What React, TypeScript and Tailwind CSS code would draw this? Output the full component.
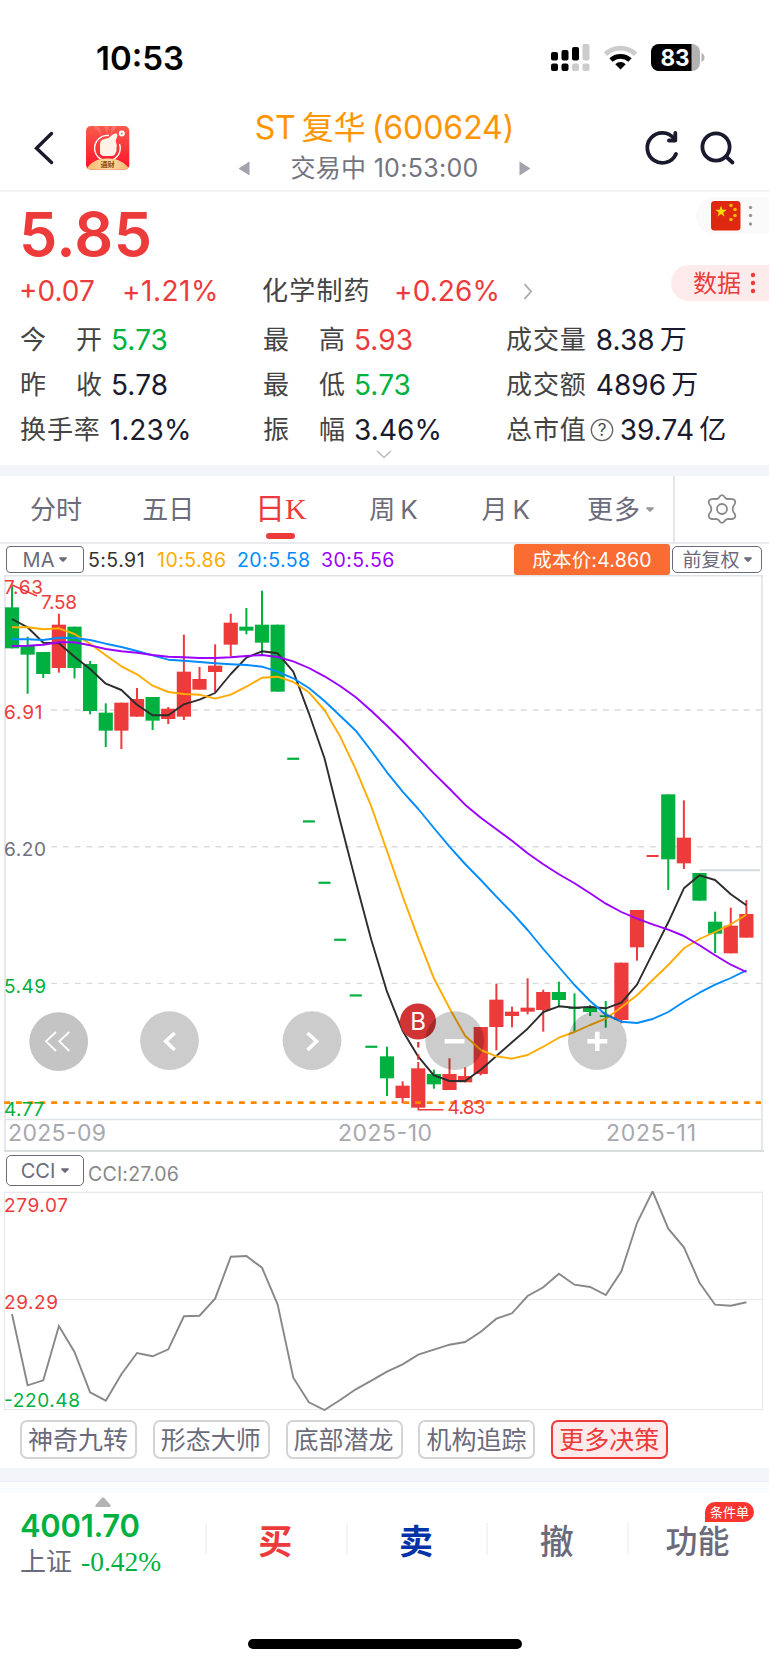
import React from "react";

type Candle = [color: "r" | "g", top: number, bottom: number, high: number, low: number];

const X0 = 12;
const STEP = 15.625;
const RED = "#ed3b3b";
const GREEN = "#00b140";
const xAt = (i: number) => X0 + i * STEP;

/* Values are stored in thirds of a pixel, relative to a base line. */
const upper = (v: number) => 465 + v / 3;
const lower = (v: number) => 760 + v / 3;

const upperCandles: Candle[] = [
  ["g", 427, 550, 362, 550],
  ["g", 543, 569, 515, 686],
  ["g", 561, 627, 561, 639],
  ["r", 479, 609, 446, 623],
  ["g", 485, 609, 485, 640],
  ["g", 597, 738, 588, 748],
  ["g", 743, 797, 715, 846],
  ["r", 713, 797, 713, 852],
  ["r", 702, 755, 669, 755],
  ["g", 696, 767, 696, 795],
  ["r", 731, 762, 726, 777],
  ["r", 620, 755, 509, 765],
  ["r", 642, 674, 606, 674],
  ["r", 602, 621, 538, 681],
  ["r", 473, 539, 446, 574],
  ["g", 485, 497, 429, 508],
  ["g", 479, 533, 377, 572],
  ["g", 479, 680, 479, 680],
];

const lowerCandles: Candle[] = [
  ["g", 889, 955, 860, 1008],
  ["r", 977, 1014, 964, 1030],
  ["r", 925, 1043, 906, 1043],
  ["g", 942, 973, 929, 986],
  ["r", 942, 990, 895, 990],
  ["r", 948, 967, 922, 967],
  ["r", 801, 942, 801, 946],
  ["r", 719, 801, 671, 871],
  ["r", 755, 768, 740, 802],
  ["r", 743, 755, 655, 763],
  ["r", 696, 750, 689, 815],
  ["g", 696, 720, 665, 738],
  ["g", 742, 747, 700, 815],
  ["g", 740, 756, 735, 768],
  ["g", 766, 771, 723, 803],
  ["r", 608, 780, 608, 790],
  ["r", 450, 562, 450, 602],
  ["r", 285, 291, 288, 288],
  ["g", 103, 298, 103, 390],
  ["r", 233, 310, 121, 327],
  ["g", 339, 422, 339, 422],
  ["g", 485, 521, 455, 579],
  ["r", 497, 580, 443, 580],
  ["r", 462, 533, 420, 533],
];

const limitDays: [number, number][] = [
  [18, upper(881)],
  [19, lower(184)],
  [20, lower(368)],
  [21, lower(539)],
  [22, lower(706)],
  [23, lower(860)],
];

const series = (up: number[], low: number[]) => [...up.map(upper), ...low.map(lower)];

const ma5 = series(
  [462, 487, 533, 535, 575, 612, 656, 675, 719, 751, 751, 718, 704, 684, 627, 578, 559, 565, 620, 745],
  [-5, 182, 365, 541, 695, 812, 890, 946, 963, 963, 929, 888, 847, 806, 756, 739, 743, 741, 745, 728, 674, 580, 487, 385, 346, 360, 403, 436]
);
const ma10 = series(
  [487, 487, 493, 490, 507, 536, 571, 604, 628, 662, 681, 687, 689, 701, 689, 665, 638, 635, 651, 682, 735, 814],
  [28, 140, 273, 408, 536, 655, 745, 827, 870, 889, 896, 885, 860, 833, 816, 795, 776, 742, 706, 660, 615, 565, 537, 516, 493, 464]
);
const ma20 = series(
  [523, 523, 525, 518, 519, 525, 536, 546, 558, 571, 584, 587, 591, 595, 598, 600, 605, 620, 640, 669, 708, 752, 797, 858],
  [37, 95, 147, 204, 260, 312, 360, 410, 458, 510, 567, 621, 675, 723, 764, 785, 789, 777, 756, 725, 698, 674, 654, 631]
);
const ma30 = series(
  [543, 542, 539, 532, 532, 541, 552, 559, 563, 570, 575, 577, 579, 579, 577, 573, 570, 576, 589, 609, 634, 663, 697, 738, 782, 828],
  [-8, 40, 86, 134, 173, 208, 242, 280, 313, 343, 370, 400, 431, 456, 476, 493, 509, 528, 556, 586, 614, 636]
);
const cci = [
  492, 706, 691, 528, 606, 727, 752, 673, 609, 619, 598, 499, 497, 446, 320, 318, 353, 463, 683, 757, 780, 750, 718, 692,
  665, 643, 614, 599, 584, 576, 545, 506, 490, 438, 412, 371, 404, 411, 435, 364, 219, 124, 236, 292, 398, 464, 467, 457,
].map((v) => 1150 + v / 3);

const points = (ys: number[]) => ys.map((y, i) => `${xAt(i).toFixed(1)},${y.toFixed(1)}`).join(" ");

function CandleShape({ i, c, map }: { i: number; c: Candle; map: (v: number) => number }) {
  const fill = c[0] === "r" ? RED : GREEN;
  const flat = c[2] - c[1] < 7;
  const w = flat ? 12 : 14.2;
  const x = xAt(i);
  return (
    <g fill={fill}>
      <rect x={x - 1} y={map(c[3])} width={2} height={(c[4] - c[3]) / 3} />
      <rect x={Math.max(5, x - w / 2)} y={map(c[1])} width={Math.min(w, x + w / 2 - 5)} height={(c[2] - c[1]) / 3} />
    </g>
  );
}

type LabelProps = { x: number; y: number; w: number; fill: string; size?: number; children: string };
function Label({ x, y, w, fill, size = 19, children }: LabelProps) {
  return (
    <text x={x} y={y} fill={fill} fontSize={size} textLength={w} lengthAdjust="spacing">
      {children}
    </text>
  );
}

function PriceChart() {
  return (
    <svg width="769" height="577" viewBox="0 575 769 577" className="block shrink-0">
      <path d="M5 1151V576M762 576V1151" stroke="#dfe4ea" strokeWidth="1.6" fill="none" />
      <path d="M4 575.5H763" stroke="#dfe3e7" strokeWidth="2" />
      <path d="M5 1119.5H762" stroke="#e0e4e7" strokeWidth="1.3" />
      <path d="M4 1151H764" stroke="#d9dddc" strokeWidth="2" />
      <g stroke="#d9dcdf" strokeWidth="1.4" strokeDasharray="5.87 5.87">
        <path d="M51.2 710H761" strokeWidth="2" stroke="#e0e4e4" />
        <path d="M51.2 846.7H761M51.2 983.4H761" />
      </g>
      <path d="M699.5 870.2H760" stroke="#d3dbe0" strokeWidth="2" />

      {upperCandles.map((c, i) => (
        <CandleShape key={i} i={i} c={c} map={upper} />
      ))}
      {lowerCandles.map((c, i) => (
        <CandleShape key={i} i={i + 24} c={c} map={lower} />
      ))}
      {limitDays.map(([i, y]) => (
        <rect key={i} x={xAt(i) - 6} y={y - 1} width={12} height={2.2} fill={GREEN} />
      ))}

      <path d="M4.2 1102.6H761" stroke="#ff8800" strokeWidth="2.8" strokeDasharray="5.87 5.87" />

      <g fill="none" strokeWidth="1.9" strokeLinejoin="round">
        <polyline points={points(ma5)} stroke="#2d2d2d" />
        <polyline points={points(ma10)} stroke="#ffab00" />
        <polyline points={points(ma20)} stroke="#008cff" />
        <polyline points={points(ma30)} stroke="#9c00ff" />
      </g>

      <path d="M12 585L37 596M418.3 1107V1109.8H443.5" stroke={RED} strokeWidth="1.6" fill="none" />
      <path d="M418.3 1042V1062" stroke="#cf3535" strokeWidth="2.2" strokeDasharray="5.5 6.8" />

      <circle cx="418" cy="1021.5" r="18" fill="#d03434" />
      <text x="418" y="1030" fontSize="24" fill="#fff" textAnchor="middle">B</text>

      <g fill="#000">
        <circle cx="58.7" cy="1041.7" r="29.4" fillOpacity=".23" />
        <circle cx="169.5" cy="1040.7" r="29.4" fillOpacity=".2" />
        <circle cx="312" cy="1040.7" r="29.4" fillOpacity=".2" />
        <circle cx="454.7" cy="1040.7" r="29.4" fillOpacity=".2" />
        <circle cx="597.3" cy="1040.7" r="29.4" fillOpacity=".2" />
      </g>
      <g fill="none" stroke="#fff">
        <path d="M56 1032L46 1041.3L56 1051M69.3 1032L59.3 1041.3L69.3 1051" strokeWidth="1.8" />
        <path d="M174.7 1033L165.7 1041.3L174.7 1050" strokeWidth="3.6" />
        <path d="M307.5 1033L316.5 1041.3L307.5 1050" strokeWidth="3.6" />
        <path d="M444.7 1041.3H464.5M587.3 1041.3H607.3M597.3 1031.7V1051" strokeWidth="4.6" />
      </g>

      <Label x={4} y={594.3} w={39} fill={RED}>7.63</Label>
      <Label x={41} y={608.7} w={36} fill={RED}>7.58</Label>
      <Label x={4} y={719.3} w={38.5} fill={RED}>6.91</Label>
      <Label x={4} y={855.7} w={42} fill="#6f707d">6.20</Label>
      <Label x={4} y={992.5} w={42} fill={GREEN}>5.49</Label>
      <Label x={4} y={1115.5} w={40} fill={GREEN}>4.77</Label>
      <Label x={447.5} y={1113.5} w={38} fill={RED}>4.83</Label>
      <Label x={8} y={1141} w={98} size={23} fill="#a8a8b0">2025-09</Label>
      <Label x={338} y={1141} w={94} size={23} fill="#a8a8b0">2025-10</Label>
      <Label x={606} y={1141} w={90} size={23} fill="#a8a8b0">2025-11</Label>
    </svg>
  );
}

function CciChart() {
  return (
    <svg width="769" height="220" viewBox="0 1191 769 220" className="block shrink-0">
      <path d="M4.5 1192.3H762.5V1409.5H4.5ZM4.5 1299.5H762.5" fill="none" stroke="#e6e8ea" strokeWidth="1.2" />
      <polyline points={points(cci)} fill="none" stroke="#888" strokeWidth="1.9" />
      <Label x={4} y={1211.7} w={64} fill={RED}>279.07</Label>
      <Label x={4} y={1309} w={54} fill={RED}>29.29</Label>
      <Label x={4} y={1406.5} w={76} fill={GREEN}>-220.48</Label>
    </svg>
  );
}

function Caret({ className = "" }: { className?: string }) {
  return (
    <svg width="8" height="5" viewBox="0 0 8 5" className={className}>
      <path d="M.3 .3H7.700V1.500L4.800 4.400Q4 5 3.200 4.400L.3 1.500Z" fill="currentColor" />
    </svg>
  );
}

function Stat({ label, spread, value, tone, unit, help }: {
  label: string; spread?: boolean; value: string; tone: string; unit?: string; help?: boolean;
}) {
  return (
    <div className="flex h-[45px] items-center">
      <div className={`flex text-[26px] text-[#444] ${spread ? "w-[82px] justify-between" : "tracking-[0.9px]"}`}>
        {spread ? [...label].map((ch) => <span key={ch}>{ch}</span>) : label}
      </div>
      {help ? (
        <svg width="24" height="24" viewBox="0 0 24 24" className="ml-[3px] shrink-0">
          <circle cx="12" cy="12" r="10.700" fill="none" stroke="#666" strokeWidth="1.300" />
          <text x="12" y="18" fontSize="17" textAnchor="middle" fill="#444">?</text>
        </svg>
      ) : null}
      <div className={`flex items-center text-[28px] ${tone} ${help ? "ml-[6px]" : "ml-[9px]"}`}>
        <span className="tracking-[0.1px]">{value}</span>
        {unit ? <span className="ml-[5px] text-[27px]">{unit}</span> : null}
      </div>
    </div>
  );
}

function StatusBar() {
  return (
    <div className="flex h-[96px] shrink-0 items-start pt-[41px]">
      <div className="ml-[96px] mt-px flex h-[33px] w-[455px] items-center text-[33px] font-semibold text-black">10:53</div>
      <svg width="160" height="33" viewBox="551 41 160 33">
        <rect x="551" y="52" width="7" height="8.500" rx="2" />
        <rect x="561.500" y="50" width="7" height="10.500" rx="2" />
        <rect x="572" y="47" width="7" height="13.500" rx="2" />
        <rect x="582.500" y="44" width="7" height="16.500" rx="2" fill="#ccc" />
        <rect x="551" y="63.500" width="7" height="7.500" rx="2" />
        <rect x="561.500" y="63.500" width="7" height="7.500" rx="2" />
        <rect x="572" y="63.500" width="7" height="7.500" rx="2" fill="#ccc" />
        <rect x="582.500" y="63.500" width="7" height="7.500" rx="2" fill="#ccc" />
        <g fill="none" strokeWidth="4.800">
          <path d="M605.500 54.200A21.500 21.500 0 0 1 635.500 54.200" stroke="#ccc" />
          <path d="M611 60A14 14 0 0 1 630 60" stroke="#000" />
        </g>
        <path d="M620.500 69.500L615.300 64.200A7.500 7.500 0 0 1 625.700 64.200Z" />
        <clipPath id="battery"><rect x="651" y="44" width="49" height="27" rx="8" /></clipPath>
        <g clipPath="url(#battery)">
          <rect x="651" y="44" width="49" height="27" fill="#b3b3b3" />
          <rect x="651" y="44" width="40.500" height="27" />
        </g>
        <path d="M701.500 53Q704.500 54.500 704.500 57.500T701.500 62Z" fill="#b3b3b3" />
        <text x="675" y="65.700" fontSize="22.500" fontWeight="700" fill="#fff" textAnchor="middle" textLength="29">83</text>
      </svg>
    </div>
  );
}

function Header() {
  return (
    <div className="flex h-[96px] shrink-0 border-b-2 border-[#f2f2f4]">
      <svg width="140" height="94" viewBox="0 96 140 94">
        <defs>
          <linearGradient id="logo" x1="0" y1="0" x2="0" y2="1">
            <stop offset="0" stopColor="#f85a4c" />
            <stop offset="1" stopColor="#ff0f28" />
          </linearGradient>
          <linearGradient id="gold" x1="0" y1="0" x2="1" y2="0">
            <stop offset="0" stopColor="#f3b96c" />
            <stop offset=".5" stopColor="#f9dca2" />
            <stop offset="1" stopColor="#f3b96c" />
          </linearGradient>
          <clipPath id="logoClip"><rect x="86" y="126" width="43.300" height="43.700" rx="5" /></clipPath>
        </defs>
        <path d="M51.500 133.500L36.500 148.200L51.500 162.500" fill="none" stroke="#1a1a2e" strokeWidth="3.400" strokeLinecap="round" />
        <g clipPath="url(#logoClip)">
          <rect x="86" y="126" width="44" height="45" fill="url(#logo)" />
          <path d="M104 126L107 135L109 126ZM112 126L110 136L117 126ZM93 126L103 137L98 126Z" fill="#fff" fillOpacity=".15" />
          <path d="M109 135.500A12.800 12.800 0 1 0 119.500 144" fill="none" stroke="#fff" strokeWidth="1.400" />
          <path d="M100 146Q99.500 139.500 104.500 139Q109 138.500 111 136Q113 133 116.500 133.500Q118.500 134.500 116 139.500Q115.500 141 116 142.500Q117.500 145 116.500 148Q117 151 115.500 153Q114.500 156.500 111 156H103.500Q99.500 155.500 100 151Z" fill="#fff3e8" />
          <circle cx="121.800" cy="133.400" r="3" fill="#fff" />
          <circle cx="121.800" cy="133.400" r="1" fill="#f87060" />
          <path d="M86 170Q92 158.500 107.500 158.500T130 170Z" fill="url(#gold)" />
          <text x="107.600" y="166.900" fontSize="7.200" fontWeight="700" fill="#8a4b14" textAnchor="middle">通财</text>
        </g>
      </svg>
      <div className="flex w-[489px] flex-col items-center pt-4">
        <div className="flex h-8 items-center gap-[6px] text-[32px] tracking-[-0.05px] text-[#ff9500]">
          <span>ST</span>
          <span>复华</span>
          <span>(600624)</span>
        </div>
        <div className="mt-3 flex h-6 items-center text-[25px] text-[#74747f]">
          <svg width="12" height="15" viewBox="0 0 12 15" className="mr-10"><path d="M11.500 .5V14.500L.5 7.500Z" fill="#a3a3ab" /></svg>
          <span className="tracking-[0.3px]">交易中 10:53:00</span>
          <svg width="12" height="15" viewBox="0 0 12 15" className="ml-10"><path d="M.5 .5V14.500L11.500 7.500Z" fill="#a3a3ab" /></svg>
        </div>
      </div>
      <svg width="139" height="94" viewBox="629 96 139 94">
        <g fill="none" stroke="#1a1a2e" strokeWidth="3.800" strokeLinecap="round">
          <path d="M676 154A15 15 0 1 1 674 138.500" />
          <path d="M675.300 133V140.500H669" strokeLinejoin="round" />
          <circle cx="716" cy="147" r="13.600" />
          <path d="M726 156.500L732.500 162.500" />
        </g>
      </svg>
    </div>
  );
}

function Quote() {
  return (
    <div className="flex h-[273px] shrink-0 flex-col">
      <div className="flex h-[76px] items-start justify-between">
        <div className="mt-[11px] ml-[19px] flex h-[62px] items-center text-[61px] font-semibold tracking-[0.3px] text-[#ed3b3b]">5.85</div>
        <div className="mt-[5px] flex h-[37px] w-[73px] items-center rounded-l-full bg-[#fafafa] pl-[15px]">
          <svg width="50" height="30" viewBox="0 0 50 30">
            <rect width="29.500" height="29.500" rx="3.500" fill="#de2910" />
            <path d="M10 4.700L11.400 8.800H15.700L12.200 11.400L13.500 15.500L10 13L6.500 15.500L7.800 11.400L4.300 8.800H8.600Z" fill="#ffde00" />
            <circle cx="20" cy="4.500" r="1.800" fill="#f5b800" />
            <circle cx="24" cy="8.500" r="1.800" fill="#f5b800" />
            <circle cx="24" cy="14.500" r="1.800" fill="#f5b800" />
            <circle cx="20" cy="18.500" r="1.800" fill="#f5b800" />
            <circle cx="39.500" cy="6.500" r="1.700" fill="#999" />
            <circle cx="39.500" cy="14.500" r="1.700" fill="#999" />
            <circle cx="39.500" cy="23" r="1.700" fill="#999" />
          </svg>
        </div>
      </div>
      <div className="flex h-[46px] items-center text-[28px] text-[#ed3b3b]">
        <div className="flex w-[243px] pl-[19px]">
          <span className="w-[103px]">+0.07</span>
          <span className="tracking-[0.5px]">+1.21%</span>
        </div>
        <div className="flex w-[428px] items-center pl-[19px]">
          <span className="w-[132px] text-[26px] tracking-[1.2px] text-[#444]">化学制药</span>
          <span className="tracking-[0.1px]">+0.26%</span>
          <svg width="10" height="17" viewBox="0 0 10 17" className="ml-[23px]"><path d="M1.500 1L8 8.500L1.500 16" fill="none" stroke="#aaa" strokeWidth="1.800" /></svg>
        </div>
        <div className="mb-[17px] flex h-[36px] w-[98px] items-center rounded-l-full bg-[#fdebeb] pl-[22px] text-[24px]">
          <span className="pt-[3px]">数据</span>
          <svg width="6" height="22" viewBox="0 0 6 22" className="ml-[9px]">
            <circle cx="3" cy="3" r="2.200" fill="#ed3b3b" /><circle cx="3" cy="11" r="2.200" fill="#ed3b3b" /><circle cx="3" cy="19" r="2.200" fill="#ed3b3b" />
          </svg>
        </div>
      </div>
      <div className="mt-[3px] grid h-[135px] shrink-0 grid-cols-[243px_243px_1fr] pl-5">
        <Stat label="今开" spread value="5.73" tone="text-[#00b140]" />
        <Stat label="最高" spread value="5.93" tone="text-[#ed3b3b]" />
        <Stat label="成交量" value="8.38" unit="万" tone="text-[#1a1a2e]" />
        <Stat label="昨收" spread value="5.78" tone="text-[#1a1a2e]" />
        <Stat label="最低" spread value="5.73" tone="text-[#00b140]" />
        <Stat label="成交额" value="4896" unit="万" tone="text-[#1a1a2e]" />
        <Stat label="换手率" value="1.23%" tone="text-[#1a1a2e]" />
        <Stat label="振幅" spread value="3.46%" tone="text-[#1a1a2e]" />
        <Stat label="总市值" value="39.74" unit="亿" help tone="text-[#1a1a2e]" />
      </div>
      <svg width="16" height="9" viewBox="0 0 16 9" className="-mt-[2px] ml-[375.5px] shrink-0"><path d="M1 1L8 7.500L15 1" fill="none" stroke="#bbb" strokeWidth="1.600" /></svg>
    </div>
  );
}

function Tabs() {
  return (
    <div className="flex h-[68px] shrink-0 border-b-2 border-[#e8eaed] text-[26px] text-[#6b6b7b]">
      <div className="grid w-[673px] grid-cols-6 items-center pt-px text-center">
        <span>分时</span>
        <span>五日</span>
        <div className="flex h-full flex-col items-center pt-4 pl-px">
          <span className="text-[30px] text-[#ed3b3b]">日<span className="font-['Liberation_Serif']">K</span></span>
          <span className="mt-[9px] h-[6px] w-[29px] rounded-full bg-[#ed3b3b]" />
        </div>
        <span className="pl-[2px]">周<span className="ml-[5px]">K</span></span>
        <span className="pl-[2px]">月<span className="ml-[5px]">K</span></span>
        <span className="flex items-center justify-center gap-[5px] pl-[7px] tracking-[1px]">更多<Caret className="text-[#999]" /></span>
      </div>
      <div className="flex flex-1 items-center justify-center border-l-2 border-[#e4e6e9]">
        <svg width="30" height="30" viewBox="-15 -15 30 30" fill="none" stroke="#888" strokeWidth="1.800" strokeLinejoin="round">
          <path d="M-3.200 -11.200Q0 -16.500 3.200 -11.200Q4.500 -9.800 6.500 -10Q13 -10.800 13.300 -7.200Q13.500 -5.500 11.500 -3Q9.800 0 11.500 3Q13.500 5.500 13.300 7.200Q13 10.800 6.500 10Q4.500 9.800 3.200 11.200Q0 16.500 -3.200 11.200Q-4.500 9.800 -6.500 10Q-13 10.800 -13.300 7.200Q-13.500 5.500 -11.500 3Q-9.800 0 -11.500 -3Q-13.500 -5.500 -13.300 -7.200Q-13 -10.800 -6.500 -10Q-4.500 -9.800 -3.200 -11.200Z" />
          <circle r="5" />
        </svg>
      </div>
    </div>
  );
}

function MaBar() {
  return (
    <div className="flex h-[31px] shrink-0 items-center pl-[6px] text-[19.5px]">
      <div className="flex h-[27px] w-[78px] items-center justify-center gap-[5px] rounded-[4px] border border-[#6b6b7b] text-[20px] text-[#6b6b7b]">
        MA<Caret />
      </div>
      <div className="flex pt-[2px] tracking-[0.45px]">
        <span className="ml-1 w-[69px] text-[#333]">5:5.91</span>
        <span className="w-[80px] text-[#ffab00]">10:5.86</span>
        <span className="w-[84px] text-[#008cff]">20:5.58</span>
        <span className="w-[193px] text-[#9c00ff]">30:5.56</span>
      </div>
      <span className="flex h-[31px] w-[156px] items-center justify-center rounded-[3px] bg-[#fa6c32] pt-[2px] tracking-[0.2px] text-white">成本价:4.860</span>
      <div className="ml-[2px] flex h-[27px] w-[90px] items-center justify-center gap-1 rounded-[5px] border border-[#6b6b7b] text-[19px] text-[#6b6b7b]">
        <span className="pt-px">前复权</span><Caret />
      </div>
    </div>
  );
}

function Strategies() {
  const items = ["神奇九转", "形态大师", "底部潜龙", "机构追踪"];
  return (
    <div className="flex h-[57px] shrink-0 gap-[15.8px] pt-[9px] pl-5 text-[25px] text-[#6b6b7b]">
      {items.map((t) => (
        <div key={t} className="flex h-[39px] w-[117px] items-center justify-center rounded-[7px] border-2 border-[#d4d4d4] pt-[2px] pr-px">{t}</div>
      ))}
      <div className="flex h-[39px] w-[117px] items-center justify-center rounded-[7px] border-2 border-[#ed3b3b] bg-[#fdebeb] pt-[2px] pr-px text-[#ed3b3b]">更多决策</div>
    </div>
  );
}

function Action({ text, tone }: { text: string; tone: string }) {
  return (
    <div className="relative flex w-[140.7px] items-center justify-center pt-[5px]">
      <span className={tone}>{text}</span>
      {text === "功能" ? (
        <span className="absolute -top-[21px] left-[78px] flex h-[20px] w-[49px] items-center justify-center rounded-[10px] rounded-bl-none bg-[#fa3530] text-[13px] text-white">条件单</span>
      ) : null}
      <span className="absolute left-0 top-0 h-8 w-[2px] bg-[#f3f3fa]" />
    </div>
  );
}

function BottomBar() {
  return (
    <div className="flex h-[184px] shrink-0 flex-col border-t border-[#e9eaf2]">
      <div className="h-[11px] shrink-0 bg-[#fbfcfe]" />
      <div className="flex h-[146px] shrink-0">
        <div className="flex w-[205px] flex-col pl-5">
          <svg width="18" height="11" viewBox="0 0 18 11" className="mt-1 ml-[74px]"><path d="M8 .8Q9 0 10 .8L16.500 8Q17 10 16 10H2Q1 10 1.500 8Z" fill="#b3b3b3" /></svg>
          <div className="mt-[2px] flex h-[31px] items-center text-[31px] font-semibold tracking-[-0.3px] text-[#00b140]">4001.70</div>
          <div className="mt-[6px] flex h-[30px] items-center text-[26px] text-[#6b6b7b]">
            上证
            <span className="ml-[9px] font-['Liberation_Serif'] text-[27.5px] text-[#00b140]">-0.42%</span>
          </div>
        </div>
        <div className="mt-[30px] flex h-8">
          <Action text="买" tone="text-[34px] font-bold text-[#ed3b3b]" />
          <Action text="卖" tone="text-[34px] font-bold text-[#0032a8]" />
          <Action text="撤" tone="text-[34px] font-medium text-[#6b6b7b]" />
          <Action text="功能" tone="text-[32px] font-medium text-[#6b6b7b]" />
        </div>
      </div>
      <div className="ml-[247.5px] h-[10px] w-[274px] rounded-full bg-black" />
    </div>
  );
}

export default function App() {
  return (
    <div className="flex h-[1665px] w-[769px] flex-col overflow-hidden bg-white font-[Inter,'Noto_Sans_CJK_SC',sans-serif] leading-none whitespace-nowrap">
      <StatusBar />
      <Header />
      <Quote />
      <div className="h-[11px] shrink-0 bg-[#f4f5fa]" />
      <Tabs />
      <MaBar />
      <PriceChart />
      <div className="flex h-[39px] shrink-0 items-start pt-[3px] pl-[6px]">
        <div className="flex h-[31px] w-[78px] items-center justify-center gap-[6px] rounded-[5px] border border-[#6b6b7b] text-[20px] text-[#6b6b7b]">
          CCI<Caret />
        </div>
        <span className="mt-[10px] ml-1 text-[19.5px] tracking-[0.2px] text-[#888]">CCI:27.06</span>
      </div>
      <CciChart />
      <Strategies />
      <div className="h-[13px] shrink-0 bg-[#f4f5fa]" />
      <BottomBar />
    </div>
  );
}
